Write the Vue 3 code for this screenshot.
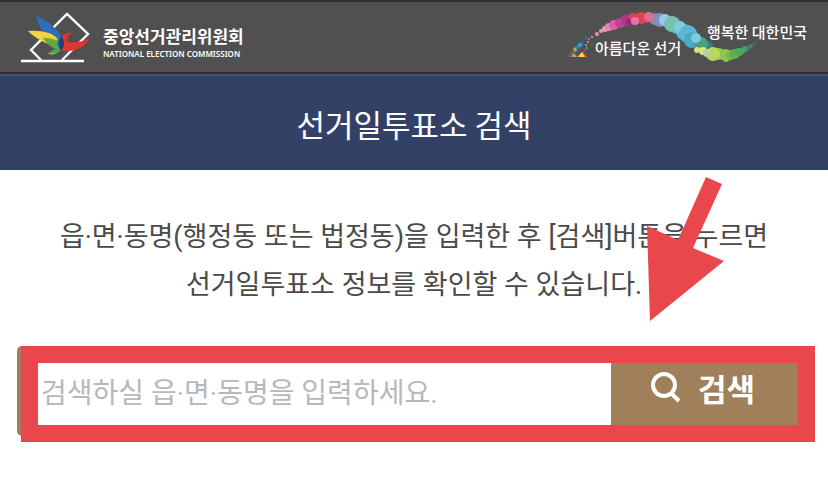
<script setup>
import { ref } from 'vue'

const keyword = ref('')

// 슬로건 물결: [x, y, 반지름, 색상]
const dots = [
  [592, 37, 1, '#e6a0b8'],
  [597, 34, 2, '#ee8fb4'],
  [601, 31, 2, '#e99abb'],
  [605, 29, 3, '#ec9cc0'],
  [609, 27, 4, '#e883b5'],
  [614, 25, 5, '#de5da2'],
  [620, 23, 5, '#c43f94'],
  [627, 20, 6, '#b0358b'],
  [629, 22, 3, '#8d2a75'],
  [633, 17, 4, '#df4150'],
  [641, 18, 6, '#e2434b'],
  [635, 21, 4, '#e575ab'],
  [646, 18, 5, '#d8485c'],
  [655, 19, 6, '#7f87bb'],
  [649, 17, 5, '#e26c8c'],
  [660, 20, 7, '#818fc1'],
  [665, 20, 6, '#96cbee'],
  [677, 27, 7, '#5dbfae'],
  [672, 24, 8, '#78c2b2'],
  [684, 32, 8, '#62b9d7'],
  [680, 27, 6, '#7fcbe4'],
  [688, 34, 9, '#5bb7d8'],
  [692, 40, 8, '#4aabc9'],
  [708, 46, 5, '#317f79'],
  [701, 44, 7, '#4c9f80'],
  [696, 38, 5, '#7dcae2'],
  [697, 50, 3, '#d9df82'],
  [703, 51, 4, '#e0e47c'],
  [719, 54, 6, '#91c35a'],
  [713, 54, 7, '#bdd558'],
  [707, 53, 4, '#b0d29b'],
  [726, 55, 6, '#8dc54d'],
  [726, 59, 3, '#8dc54d'],
  [731, 55, 5, '#70b953'],
  [735, 54, 5, '#5eb155'],
  [739, 52, 4, '#50aa57'],
  [742, 51, 3, '#47a766'],
  [745, 49, 3, '#42a06d'],
  [748, 48, 2, '#388f70'],
  [751, 46, 2, '#388f70'],
  [754, 44, 1, '#347f77'],
  [756, 43, 1, '#33727a'],
]

// 기표 문양 주변의 작은 점
const sparks = [
  [586, 38, 1, '#2e7fc0'],
  [589, 39, 1, '#e5669c'],
  [582, 42, 2, '#2768a5'],
  [580, 45, 2, '#3aa0d5'],
  [577, 47, 1, '#3e86b8'],
  [588, 42, 1, '#e8879e'],
  [586, 45, 1, '#8bbf5a'],
  [592, 44, 1, '#2e8088'],
  [587, 48, 1, '#4fb3c4'],
  [585, 50, 1, '#d74665'],
]
</script>

<template>
  <div class="page">
    <header class="header">
      <a class="brand" href="#">
        <svg class="brand-mark" viewBox="20 11 70 52" aria-hidden="true">
          <path d="M21 61H84M41 60L31 50L67 14L88 34L62 60" fill="none" stroke="#fff" stroke-width="2.4" />
          <path d="M36 15C46 21 58 27 62 39L62 49C57 43 40 36 36 15Z" fill="#2b70b8" />
          <path d="M28 31C40 30 56 32 60 43L60 47C47 45 36 39 28 31Z" fill="#f5d341" />
          <path d="M43 38C51 38 59 39 62 47L60 50C52 49 46 43 43 38Z" fill="#66a83c" />
          <path d="M47 53C51 53 52 48 61 48C60 54 53 56 47 53Z" fill="#42a95a" />
          <path d="M47 53C50 54 54 54 56 52C54 55 50 55 47 53Z" fill="#e7d23c" />
          <path d="M60 41C61 35 66 32 72 33C68 35 67 38 67 42C76 43 83 42 90 38C85 47 76 52 62 51Z" fill="#df352e" />
          <path d="M61 36C66 42 64 48 61 50C57 47 57 41 61 36Z" fill="#203d7c" />
          <path d="M57 40C56 43 57 46 59 48C58 43 59 41 61 36C59 37 58 38 57 40Z" fill="#168fa0" />
        </svg>
        <span class="brand-name">
          <strong>중앙선거관리위원회</strong>
          <small>NATIONAL ELECTION COMMISSION</small>
        </span>
      </a>

      <svg class="slogan" viewBox="565 8 243 58" role="img" aria-label="아름다운 선거 행복한 대한민국">
        <path d="M566 57L581 42L583 45L572 57Z" fill="#8a5946" />
        <path d="M571 51L581 41L583 45L575 53Z" fill="#2d73a8" />
        <path d="M573 49L575 47L577 50L575 52Z" fill="#e79b35" />
        <path d="M566 57L570 53L572 57Z" fill="#8a3f86" />
        <path d="M571 57L574 53L577 57Z" fill="#8cc04b" />
        <path d="M576 57L583 51L587 57Z" fill="#d94b3f" />
        <path d="M578 57L582 52L585 57Z" fill="#f0dc3c" />
        <circle v-for="(d, i) in sparks" :key="`s${i}`" :cx="d[0]" :cy="d[1]" :r="d[2]" :fill="d[3]" />
        <circle v-for="(d, i) in dots" :key="`d${i}`" :cx="d[0]" :cy="d[1]" :r="d[2]" :fill="d[3]" />
        <text x="595" y="54">아름다운 선거</text>
        <text x="707" y="38">행복한 대한민국</text>
      </svg>
    </header>

    <h1 class="title">
      선거일투표소 검색
    </h1>

    <main class="content">
      <p class="guide">
        읍·면·동명(행정동 또는 법정동)을 입력한 후 [검색]버튼을 누르면<br>
        선거일투표소 정보를 확인할 수 있습니다.
      </p>

      <div class="search-area">
        <form class="search" @submit.prevent>
          <input v-model="keyword" type="text" aria-label="읍·면·동명" placeholder="검색하실 읍·면·동명을 입력하세요.">
          <button type="submit">
            <svg class="search-icon" viewBox="0 0 32 32" aria-hidden="true">
              <circle cx="14" cy="14" r="11" />
              <path d="M21 22L29 30" />
            </svg>
            검색
          </button>
        </form>

        <!-- 검색창 강조 표시 -->
        <div class="highlight" />
        <svg class="arrow" viewBox="0 0 77 144" aria-hidden="true">
          <path d="M59 0L75 7L46 71L77 84L3 144L0 49L31 63Z" fill="#e9474b" />
        </svg>
      </div>
    </main>
  </div>
</template>

<style>
body {
  margin: 0;
  background: #fff;
}
</style>

<style scoped>
.page {
  font-family: 'Noto Sans CJK KR', sans-serif;
  color: #4a4a4a;
}

.header {
  display: flex;
  align-items: center;
  justify-content: space-between;
  box-sizing: border-box;
  height: 74px;
  padding: 0 20px;
  background: #505050;
  border-top: 2px solid #303030;
  border-bottom: 2px solid #303030;
}

.brand {
  display: flex;
  align-items: center;
  gap: 13px;
  color: #fff;
  text-decoration: none;
}

.brand-mark {
  width: 70px;
  height: 52px;
}

.brand-name {
  display: flex;
  flex-direction: column;
  padding-top: 10px;
}

.brand-name strong {
  font-size: 17px;
  line-height: 24px;
}

.brand-name small {
  font-family: 'Noto Sans', sans-serif;
  font-size: 8px;
  font-weight: 600;
  line-height: 12px;
}

.slogan {
  width: 243px;
  height: 58px;
}

.slogan text {
  font-size: 15px;
  font-weight: 500;
  fill: #fff;
}

.title {
  margin: 0;
  padding: 25px 0 23px;
  border-top: 2px solid #43517a;
  background: #344166;
  color: #fff;
  font-size: 31px;
  font-weight: 400;
  line-height: 46px;
  text-align: center;
}

.content {
  padding: 43px 13px 36px;
}

.guide {
  margin: 0;
  font-family: Roboto, 'Noto Sans CJK KR', sans-serif;
  font-size: 27px;
  line-height: 48px;
  text-align: center;
}

.search-area {
  position: relative;
  margin: 37px 0 0 4px;
}

.search {
  display: flex;
  box-sizing: border-box;
  height: 90px;
  padding: 5px;
  border-radius: 5px;
  background: #a0805a;
}

.search input {
  flex: 1;
  min-width: 0;
  padding: 4px 19px 0;
  border: 0;
  background: #fff;
  color: #4a4a4a;
  font-family: Roboto, 'Noto Sans CJK KR', sans-serif;
  font-size: 28px;
}

.search input::placeholder {
  color: #b8b8b8;
  opacity: 1;
}

.search button {
  display: flex;
  align-items: center;
  justify-content: center;
  gap: 16px;
  width: 199px;
  padding: 0 16px 8px 0;
  border: 0;
  background: #a0805a;
  color: #fff;
  font: inherit;
  font-size: 31px;
  font-weight: 700;
  cursor: pointer;
}

.search-icon {
  width: 32px;
  height: 32px;
  fill: none;
  stroke: #fff;
  stroke-width: 4;
}

.highlight {
  position: absolute;
  inset: 0 0 -6px 4px;
  border: 17px solid #e9474b;
  pointer-events: none;
}

.arrow {
  position: absolute;
  right: 91px;
  bottom: 115px;
  width: 77px;
  height: 144px;
  pointer-events: none;
}
</style>
